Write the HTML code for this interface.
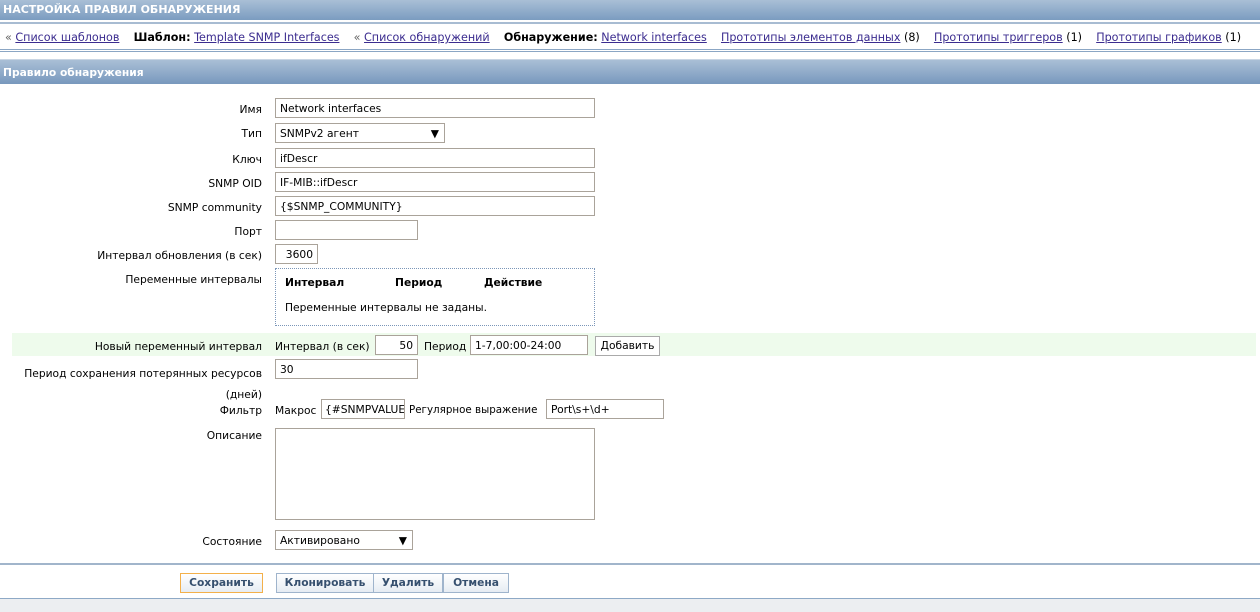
<!DOCTYPE html>
<html><head><meta charset="utf-8"><style>
*{box-sizing:border-box}
body{margin:0;width:1260px;height:612px;overflow:hidden;background:#fff;font-family:"DejaVu Sans",Verdana,sans-serif;font-size:10.7px;color:#000;position:relative}
.a{position:absolute}
.hdr{left:0;top:0;width:1260px;height:20px;background:linear-gradient(#a9bfd6,#7b9cc0);color:#fff;font-weight:bold;font-size:11px;line-height:20px;padding-left:3px}
.nav{left:0;top:22px;width:1260px;height:30px;border-top:2px solid #a8bcd2;border-bottom:3px double #8ba6c4;line-height:27px;padding-left:5px;white-space:nowrap;font-size:11.15px}
.nav a{color:#3b2c8f;text-decoration:underline}
.nav .q{color:#666}
.sec{left:0;top:59px;width:1260px;height:25px;background:linear-gradient(#a9bfd6,#7898bd);color:#fff;font-weight:bold;line-height:25px;padding-left:3px;border-top:1px solid #c8d5e4}
.l{right:998px;text-align:right;white-space:nowrap}
.in{border:1px solid #aaa39a;height:20px;padding:0 4px;line-height:19px;background:#fff;white-space:nowrap;overflow:hidden}
.btn{border:1px solid #9fb4cc;background:linear-gradient(#fff,#e6ecf3);color:#36506f;font-weight:bold;text-align:center;line-height:18px;height:20px}
</style></head><body>
<div class="a hdr">НАСТРОЙКА ПРАВИЛ ОБНАРУЖЕНИЯ</div>
<div class="a nav"><span class="q">«</span> <a>Список шаблонов</a>&nbsp;&nbsp;&nbsp; <b>Шаблон:</b> <a>Template SNMP Interfaces</a>&nbsp;&nbsp;&nbsp; <span class="q">«</span> <a>Список обнаружений</a>&nbsp;&nbsp;&nbsp; <b>Обнаружение:</b> <a>Network interfaces</a>&nbsp;&nbsp;&nbsp; <a>Прототипы элементов данных</a> (8)&nbsp;&nbsp;&nbsp; <a>Прототипы триггеров</a> (1)&nbsp;&nbsp;&nbsp; <a>Прототипы графиков</a> (1)</div>
<div class="a sec">Правило обнаружения</div>

<div class="a l" style="top:103px">Имя</div><div class="a in" style="left:275px;top:98px;width:320px">Network interfaces</div>
<div class="a l" style="top:127px">Тип</div><div class="a in" style="left:275px;top:123px;width:170px">SNMPv2 агент<span style="position:absolute;right:5px">▼</span></div>
<div class="a l" style="top:153px">Ключ</div><div class="a in" style="left:275px;top:148px;width:320px">ifDescr</div>
<div class="a l" style="top:177px">SNMP OID</div><div class="a in" style="left:275px;top:172px;width:320px">IF-MIB::ifDescr</div>
<div class="a l" style="top:201px">SNMP community</div><div class="a in" style="left:275px;top:196px;width:320px">{$SNMP_COMMUNITY}</div>
<div class="a l" style="top:225px">Порт</div><div class="a in" style="left:275px;top:220px;width:143px"></div>
<div class="a l" style="top:249px">Интервал обновления (в сек)</div><div class="a in" style="left:275px;top:244px;width:43px;text-align:right">3600</div>
<div class="a l" style="top:273px">Переменные интервалы</div>
<div class="a" style="left:275px;top:268px;width:320px;height:58px;border:1px dotted #7b96b8"></div>
<div class="a" style="left:285px;top:276px;font-weight:bold">Интервал</div>
<div class="a" style="left:395px;top:276px;font-weight:bold">Период</div>
<div class="a" style="left:484px;top:276px;font-weight:bold">Действие</div>
<div class="a" style="left:285px;top:301px">Переменные интервалы не заданы.</div>

<div class="a" style="left:12px;top:333px;width:1244px;height:23px;background:#eefbec"></div>
<div class="a l" style="top:340px">Новый переменный интервал</div>
<div class="a" style="left:275px;top:340px">Интервал (в сек)</div>
<div class="a in" style="left:375px;top:335px;width:43px;text-align:right">50</div>
<div class="a" style="left:424px;top:340px">Период</div>
<div class="a in" style="left:470px;top:335px;width:118px">1-7,00:00-24:00</div>
<div class="a btn" style="left:595px;top:336px;width:65px;border-color:#aaa;color:#000;font-weight:normal;background:#fff">Добавить</div>

<div class="a l" style="top:363px;line-height:21px">Период сохранения потерянных ресурсов<br>(дней)</div>
<div class="a in" style="left:275px;top:359px;width:143px">30</div>
<div class="a l" style="top:404px">Фильтр</div>
<div class="a" style="left:275px;top:404px">Макрос</div>
<div class="a in" style="left:321px;top:399px;width:84px;padding:0 3px">{#SNMPVALUE}</div>
<div class="a" style="left:409px;top:404px;font-size:10.3px">Регулярное выражение</div>
<div class="a in" style="left:546px;top:399px;width:118px">Port\s+\d+</div>
<div class="a l" style="top:429px">Описание</div>
<div class="a in" style="left:275px;top:428px;width:320px;height:92px"></div>
<div class="a l" style="top:535px">Состояние</div>
<div class="a in" style="left:275px;top:530px;width:138px">Активировано<span style="position:absolute;right:5px">▼</span></div>

<div class="a" style="left:0;top:563px;width:1260px;height:36px;border-top:2px solid #a1b5cb;border-bottom:1px solid #8ea9c6"></div>
<div class="a" style="left:0;top:599px;width:1260px;height:13px;background:#eceef1"></div>
<div class="a btn" style="left:180px;top:573px;width:83px;border-color:#f3b04a">Сохранить</div>
<div class="a btn" style="left:276px;top:573px;width:98px">Клонировать</div>
<div class="a btn" style="left:373px;top:573px;width:70px">Удалить</div>
<div class="a btn" style="left:443px;top:573px;width:66px">Отмена</div>
</body></html>
